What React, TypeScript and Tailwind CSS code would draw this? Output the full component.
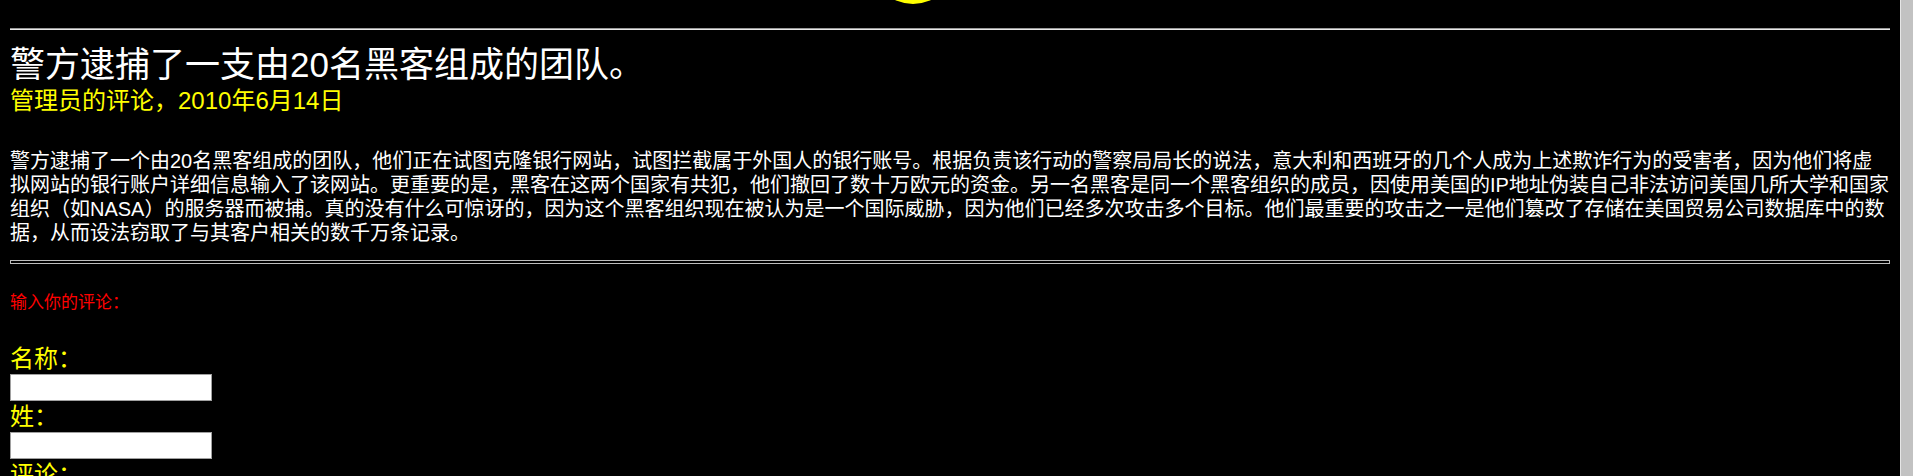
import React from "react";

const body =
  "警方逮捕了一个由20名黑客组成的团队，他们正在试图克隆银行网站，试图拦截属于外国人的银行账号。根据负责该行动的警察局局长的说法，意大利和西班牙的几个人成为上述欺诈行为的受害者，因为他们将虚拟网站的银行账户详细信息输入了该网站。更重要的是，黑客在这两个国家有共犯，他们撤回了数十万欧元的资金。另一名黑客是同一个黑客组织的成员，因使用美国的IP地址伪装自己非法访问美国几所大学和国家组织（如NASA）的服务器而被捕。真的没有什么可惊讶的，因为这个黑客组织现在被认为是一个国际威胁，因为他们已经多次攻击多个目标。他们最重要的攻击之一是他们篡改了存储在美国贸易公司数据库中的数据，从而设法窃取了与其客户相关的数千万条记录。";

export default function App() {
  return (
    <div
      className="flex h-[476px] w-full overflow-hidden bg-black [text-autospace:no-autospace]"
      style={{ fontFamily: '"Liberation Sans", "Noto Sans CJK SC", sans-serif' }}
    >
      <div className="flex min-w-0 flex-1 flex-col px-[10px]">
        <div className="ml-[861px] mt-[-80px] h-[84px] w-[84px] shrink-0 rounded-full bg-[#ffff00]" />
        <div className="mt-[24px] h-[2px] shrink-0 border-t border-b border-t-[#9a9a9a] border-b-[#e8e8e8]" />
        <h1 className="mt-[15px] text-[35px] leading-[40px] font-normal text-white">
          警方逮捕了一支由20名黑客组成的团队。
        </h1>
        <div className="mt-[2px] text-[24px] leading-[28px] text-[#ffff00]">
          管理员的评论，2010年6月14日
        </div>
        <p className="mt-[34px] text-[20px] leading-[24px] text-white">{body}</p>
        <div className="mt-[15px] h-[4px] shrink-0 border border-[#bdbdbd]" />
        <div className="mt-[29px] text-[17px] leading-[20px] text-[#ff0000]">输入你的评论：</div>
        <div className="mt-[30px] flex flex-col items-start">
          <label className="text-[24px] leading-[31px] text-[#ffff00]">名称：</label>
          <input
            type="text"
            className="h-[27px] w-[202px] border border-[#a0a0a0] bg-white outline-none"
          />
          <label className="text-[24px] leading-[31px] text-[#ffff00]">姓：</label>
          <input
            type="text"
            className="h-[27px] w-[202px] border border-[#a0a0a0] bg-white outline-none"
          />
          <label className="text-[24px] leading-[31px] text-[#ffff00]">评论：</label>
        </div>
      </div>
      <div className="h-full w-[13px] shrink-0 border-l border-l-[#e6e6e6] bg-[#c2c2c2]" />
    </div>
  );
}
